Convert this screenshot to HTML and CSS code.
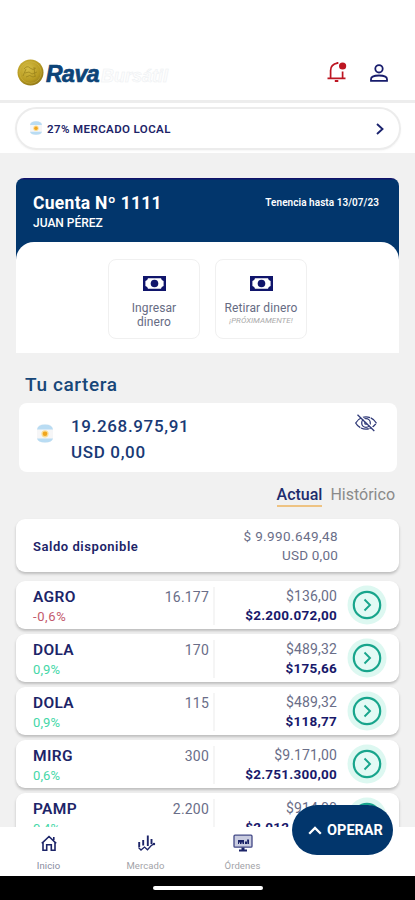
FILE: index.html
```html
<!DOCTYPE html>
<html lang="es">
<head>
<meta charset="utf-8">
<meta name="viewport" content="width=device-width, initial-scale=1">
<title>Rava Bursátil</title>
<link rel="stylesheet" href="styles.css">
</head>
<body>
<svg class="defs" aria-hidden="true">
  <symbol id="flag" viewBox="0 0 16 18">
    <rect width="16" height="18" rx="5" fill="#f6f6f7"/>
    <path d="M0 5Q1 0 8 0T16 5Z" fill="#b9dcf3"/>
    <path d="M0 14Q1 18 8 18T16 14Z" fill="#b9dcf3"/>
    <circle cx="8" cy="9.3" r="3.6" fill="#fbdc91"/>
    <circle cx="8" cy="9.3" r="2.3" fill="#f0a51e"/>
  </symbol>
  <symbol id="bill" viewBox="0 0 23 15">
    <rect width="23" height="15" fill="#10156b"/>
    <path d="M5 2.3h13q.3 2.2 2.6 2.7v5q-2.3.5-2.6 2.7H5Q4.700 10.500 2.400 10V5Q4.700 4.500 5 2.300Z" fill="#fff"/>
    <circle cx="11.500" cy="7.500" r="3.800" fill="#10156b"/>
  </symbol>
  <symbol id="go" viewBox="0 0 40 40">
    <circle cx="20" cy="20" r="19.500" fill="#ddf8f1"/>
    <circle cx="20" cy="20" r="13.200" fill="#e3faf5" stroke="#18a58c" stroke-width="2.200"/>
    <path d="M17.500 14.500 23 20l-5.500 5.500" fill="none" stroke="#18a58c" stroke-width="1.900"/>
  </symbol>
</svg>
<div class="phone">
  <header class="top">
    <div class="brand">
      <svg class="coin" viewBox="0 0 27 27">
        <defs><radialGradient id="gold" cx=".4" cy=".35" r=".7"><stop offset="0" stop-color="#d5bd45"/><stop offset=".65" stop-color="#b89b21"/><stop offset="1" stop-color="#8d7415"/></radialGradient></defs>
        <circle cx="13.500" cy="13.500" r="13" fill="url(#gold)"/>
        <path d="M7 10q3-4 6-1t6 0M8 14l4-1 3 2 5-2M9 18q4-3 7 0l3-1M6 17l3-7M17 8l1 9" fill="none" stroke="#947d18" stroke-width="1" opacity=".65"/>
        <circle cx="13.500" cy="13.500" r="10.800" fill="none" stroke="#d6bf50" stroke-width=".7" opacity=".6"/>
      </svg>
      <span class="rava">Rava</span><span class="bursatil">Bursátil</span>
    </div>
    <svg class="bell" viewBox="0 0 20 22" fill="none" stroke="#bd1622" stroke-width="1.700">
      <path d="M10.500 1v1.200C6 3 3.600 5.800 3.600 9.500v7.300M15.600 10.500v6.300M.5 17.300h18"/>
      <path d="M7.800 20h3.500" stroke-width="2"/>
      <circle cx="15.600" cy="5" r="3.600" fill="#bd1622" stroke="none"/>
    </svg>
    <svg class="user" viewBox="0 0 18 18" fill="none" stroke="#171c6c" stroke-width="1.800">
      <circle cx="9" cy="4.800" r="3.700"/>
      <path d="M1 16.900v-1.700C1 12.800 4 11.500 9 11.500s8 1.300 8 3.700v1.700Z"/>
    </svg>
  </header>
  <section class="strip">
    <div class="market">
      <svg class="flag-sm"><use href="#flag"/></svg>
      <span class="market-name">27% MERCADO LOCAL</span>
      <svg class="chev" viewBox="0 0 8 12"><path d="M1 1l5.500 5L1 11" fill="none" stroke="#1b236e" stroke-width="1.900"/></svg>
    </div>
  </section>
  <main>
    <section class="account">
      <div class="account-head">
        <div>
          <h1>Cuenta Nº 1111</h1>
          <p class="owner">JUAN PÉREZ</p>
        </div>
        <span class="until">Tenencia hasta 13/07/23</span>
      </div>
      <div class="actions">
        <div class="action"><svg class="bill"><use href="#bill"/></svg><span class="label">Ingresar<br>dinero</span></div>
        <div class="action"><svg class="bill"><use href="#bill"/></svg><span class="label">Retirar dinero</span><em>¡PRÓXIMAMENTE!</em></div>
      </div>
    </section>
    <h2>Tu cartera</h2>
    <section class="wallet">
      <svg class="flag-lg"><use href="#flag"/></svg>
      <div class="totals"><p class="ars">19.268.975,91</p><p class="usd">USD 0,00</p></div>
      <svg class="eye" viewBox="0 0 22 18" fill="none" stroke="#303a78" stroke-width="1.300">
        <path d="M.7 9C5 .9 17 .9 21.300 9 17 17.100 5 17.100.7 9Z" stroke-dasharray="8 .7"/>
        <circle cx="11" cy="9" r="4.300"/><circle cx="11" cy="9" r="1.200"/>
        <path d="M4 .3 20.300 16.500" stroke="#fff" stroke-width="1.500"/>
        <path d="M2.500 .8 19.300 17"/>
      </svg>
    </section>
    <nav class="tabs"><span class="tab on">Actual</span><span class="tab">Histórico</span></nav>
    <section class="list">
      <div class="balance"><strong>Saldo disponible</strong><div class="amounts"><span>$ 9.990.649,48</span><span class="b2">USD 0,00</span></div></div>
      <div class="row"><div class="sym"><b>AGRO</b><i class="down">-0,6%</i></div><span class="qty">16.177</span><div class="val"><span>$136,00</span><b>$2.200.072,00</b></div><svg class="go"><use href="#go"/></svg></div>
      <div class="row"><div class="sym"><b>DOLA</b><i>0,9%</i></div><span class="qty">170</span><div class="val"><span>$489,32</span><b>$175,66</b></div><svg class="go"><use href="#go"/></svg></div>
      <div class="row"><div class="sym"><b>DOLA</b><i>0,9%</i></div><span class="qty">115</span><div class="val"><span>$489,32</span><b>$118,77</b></div><svg class="go"><use href="#go"/></svg></div>
      <div class="row"><div class="sym"><b>MIRG</b><i>0,6%</i></div><span class="qty">300</span><div class="val"><span>$9.171,00</span><b>$2.751.300,00</b></div><svg class="go"><use href="#go"/></svg></div>
      <div class="row"><div class="sym"><b>PAMP</b><i>0,4%</i></div><span class="qty">2.200</span><div class="val"><span>$914,00</span><b>$2.012.000,00</b></div><svg class="go"><use href="#go"/></svg></div>
    </section>
  </main>
  <footer class="bar">
    <div class="item first">
      <svg viewBox="0 0 20 18" fill="none" stroke="#1c2468" stroke-width="1.600"><path d="M4 8.500v7.700h3.700v-5.400h4.600v5.400H16V8.500M2.800 9.300 10 2.500l7.200 6.800M14.800 3v3"/></svg>
      <span>Inicio</span>
    </div>
    <div class="item">
      <svg viewBox="0 0 20 18" fill="none" stroke="#1c2468"><path d="M3.200 8v5M7.200 6v5.500M11.800 1.500V12M15.500 5v5" stroke-width="1.900"/><path d="M2.500 13.500 5 16l3.500-3 3 2.800 4-4.500 2.500-1.300" stroke-width="1.300"/><circle cx="18" cy="10" r="1.200" fill="#1c2468" stroke="none"/></svg>
      <span>Mercado</span>
    </div>
    <div class="item">
      <svg viewBox="0 0 20 18"><rect x="1" y="1.200" width="18" height="12" rx="1" fill="#c9cce0" stroke="#424886" stroke-width="1.300"/><path d="M5 6h6v4H9.500V8.500h-1V10H7V8.500H6V10H5zM12 7.500h2V10h-2zM14 5.500h2V10h-1.500z" fill="#1c2468"/><path d="M8.500 13.500h3v2H14V17.500H6v-2h2.500z" fill="#1c2468"/></svg>
      <span>Órdenes</span>
    </div>
    <button class="operate"><svg viewBox="0 0 14 9"><path d="M1.200 7.800 7 2l5.800 5.800" fill="none" stroke="#fff" stroke-width="2.300"/></svg>OPERAR</button>
  </footer>
  <div class="system"><span></span></div>
</div>
</body>
</html>
```
FILE: styles.css
```css
* { box-sizing: border-box; margin: 0; padding: 0; }
body { font-family: Roboto, sans-serif; background: #fff; color: #1c2468; }
.defs { position: absolute; width: 0; height: 0; }
svg { display: block; flex: none; }
.phone { width: 415px; height: 900px; display: flex; flex-direction: column; overflow: hidden; }

.top { height: 103px; flex: none; display: flex; align-items: flex-start; padding: 59px 27px 0 17px; border-bottom: 3px solid #ededed; }
.brand { display: flex; align-items: flex-start; flex: 1; }
.coin { width: 27px; height: 27px; }
.rava { font: italic 700 23px/30px "Liberation Sans", Arial, sans-serif; color: #0d4478; letter-spacing: -.5px; margin-left: 2px; -webkit-text-stroke: .7px #0d4478; }
.bursatil { font: italic 700 18px/30px "Liberation Sans", Arial, sans-serif; color: #fdfdfd; -webkit-text-stroke: .5px #eceff2; margin: 2px 0 0 2px; }
.bell { width: 20px; height: 22px; margin: 2px 23px 0 0; }
.user { width: 18px; height: 18px; margin-top: 5px; }

.strip { height: 50px; flex: none; padding: 4px 14px 0 15px; }
.market { height: 43px; border: 2px solid #ececec; border-radius: 22px; display: flex; align-items: center; padding: 0 15px 0 13px; box-shadow: 0 1px 2px #0000000a; }
.flag-sm { width: 12px; height: 14px; margin-top: -2px; }
.market-name { flex: 1; margin-left: 5px; font-size: 11.500px; font-weight: 600; letter-spacing: .4px; }
.chev { width: 8px; height: 12px; }

main { flex: 1; min-height: 0; overflow: hidden; background: #f1f1f1; padding: 25px 16px 0; }
.account { height: 175px; border-radius: 8px 8px 0 0; background: linear-gradient(#10126a 0 1px, #02366c 2px 64px, #02366c 90px, #fff 90px); overflow: hidden; }
.account-head { height: 64px; display: flex; justify-content: space-between; padding: 14px 20px 0 17px; color: #fff; }
h1 { font-size: 17.500px; line-height: 22px; font-weight: 700; letter-spacing: .28px; }
.owner { font-size: 12px; line-height: 16px; margin-top: 1px; font-weight: 500; }
.until { font-size: 10px; line-height: 12px; font-weight: 600; margin-top: 5px; letter-spacing: .05px; }
.actions { height: 111px; border-radius: 18px 18px 0 0; background: #fff; display: flex; justify-content: center; gap: 15px; padding-top: 17px; }
.action { width: 92px; height: 80px; border: 1.500px solid #f0f0f0; border-radius: 8px; display: flex; flex-direction: column; align-items: center; padding-top: 16px; text-align: center; }
.bill { width: 23px; height: 15px; }
.label { font-size: 12px; line-height: 14px; color: #666b83; margin-top: 10px; letter-spacing: .1px; }
.action em { font-size: 8px; line-height: 12px; color: #aaa; }

h2 { font-size: 19px; line-height: 24px; margin: 20px 0 0 9px; font-weight: 500; color: #174779; letter-spacing: .6px; }
.wallet { height: 69px; margin: 6px 2px 0 3px; background: #fff; border-radius: 8px; display: flex; align-items: flex-start; padding: 10px 20px 0 18px; }
.flag-lg { width: 16px; height: 19px; margin-top: 11px; }
.totals { flex: 1; margin-left: 18px; font-size: 17px; line-height: 26px; font-weight: 500; color: #193a76; letter-spacing: .65px; }
.eye { width: 22px; height: 18px; margin-top: 1px; }
.tabs { display: flex; justify-content: flex-end; gap: 8px; height: 47px; margin-right: -4px; padding: 13px 8px 0 0; font-size: 16px; line-height: 19px; color: #8a8a8a; }
.tabs { padding-right: 0; margin-right: 4px; }
.tab { height: 22px; }
.tab.on { color: #1d2c6d; font-weight: 500; border-bottom: 2px solid #eec383; }

.list { display: grid; gap: 5px; }
.balance, .row { background: #fff; border-radius: 9px; box-shadow: 0 2px 3px #00000038; }
.balance { height: 53px; margin-bottom: 4px; padding: 8px 61px 0 17px; display: flex; justify-content: space-between; }
.balance strong { font-size: 13px; line-height: 39px; font-weight: 600; letter-spacing: .55px; }
.amounts { display: flex; flex-direction: column; align-items: flex-end; font-size: 13.500px; line-height: 19px; color: #6a6e88; letter-spacing: .4px; }
.b2 { letter-spacing: .2px; }
.row { height: 48px; display: grid; grid-template-columns: 96px 80px 128px 1fr; padding-left: 17px; }
.sym { padding-top: 7px; }
.sym b { display: block; font-size: 15.500px; line-height: 19px; font-weight: 600; letter-spacing: .35px; }
.sym i { display: block; font-size: 13px; line-height: 20px; font-style: normal; color: #45d7a7; letter-spacing: .1px; }
.sym .down { color: #c45a6c; letter-spacing: .6px; }
.qty { text-align: right; font-size: 14px; line-height: 18px; color: #6a6e88; padding-top: 7px; letter-spacing: .2px; }
.val { display: flex; flex-direction: column; align-items: flex-end; height: 38px; margin: 6px 0 0 4px; border-left: 2px solid #f5f5f5; font-size: 14px; line-height: 19px; color: #6a6e88; letter-spacing: .15px; }
.val b { font-size: 13.500px; font-weight: 700; color: #18186a; letter-spacing: .25px; }
.go { width: 40px; height: 40px; margin: 4px 0 0 10px; }

.bar { position: relative; height: 49px; flex: none; background: #fff; display: flex; }
.item { width: 97px; display: flex; flex-direction: column; align-items: center; padding-top: 7px; }
.item svg { width: 20px; height: 18px; }
.item span { font-size: 9.500px; line-height: 12px; margin-top: 8px; color: #a3a3a8; letter-spacing: .1px; }
.first span { color: #888ba0; }
.operate { position: absolute; left: 292px; top: -22px; width: 101px; height: 50px; border: 0; border-radius: 25px; background: #02366c; color: #fff; display: flex; align-items: center; justify-content: center; gap: 5px; padding-left: 6px; font: 700 14.500px Roboto, sans-serif; }
.operate svg { width: 14px; height: 9px; }
.system { height: 24px; flex: none; background: #000; display: flex; justify-content: center; padding-top: 10px; }
.system span { width: 110px; height: 4px; border-radius: 2px; background: #fff; }
```
